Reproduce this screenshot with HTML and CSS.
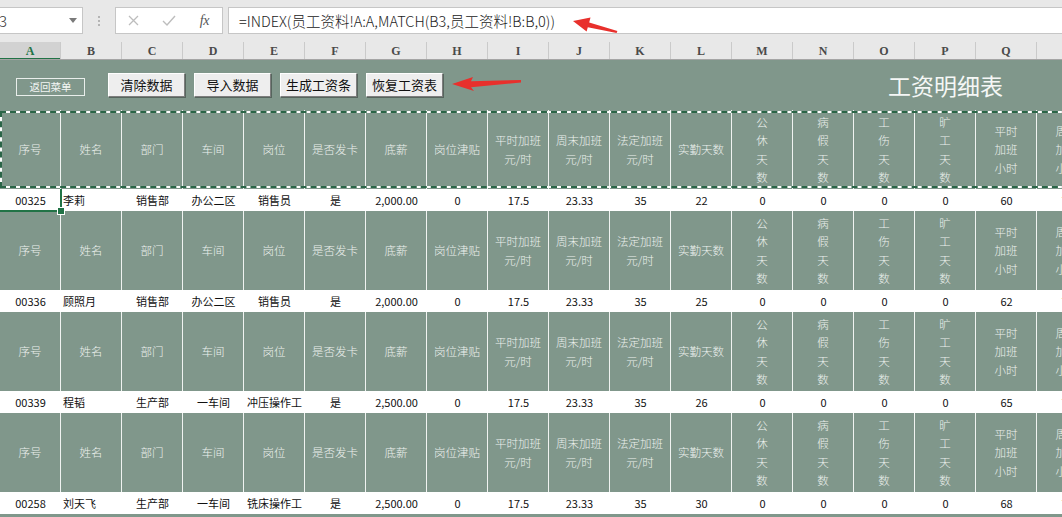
FILE: index.html
```html
<!DOCTYPE html>
<html lang="zh-CN">
<head>
<meta charset="utf-8">
<title>工资明细表</title>
<link rel="stylesheet" href="styles.css">
</head>
<body>
<div class="topbar">
  <div class="namebox"><span class="nb-text">3</span><span class="dd"></span></div>
  <div class="vdots"><i></i><i></i><i></i></div>
  <div class="fxbox">
    <span class="fxi"><svg width="11" height="11" viewBox="0 0 11 11"><path d="M1 1L10 10M10 1L1 10" stroke="#bdbdbd" stroke-width="1.3" fill="none"/></svg></span>
    <span class="fxi"><svg width="14" height="11" viewBox="0 0 14 11"><path d="M1 6L5 10L13 1" stroke="#bdbdbd" stroke-width="1.4" fill="none"/></svg></span>
    <span class="fxi fxt">fx</span>
  </div>
  <div class="formula">=INDEX(员工资料!A:A,MATCH(B3,员工资料!B:B,0))</div>
</div>
<div class="colheads">
  <div class="ch active">A</div><div class="ch">B</div><div class="ch">C</div><div class="ch">D</div><div class="ch">E</div><div class="ch">F</div><div class="ch">G</div><div class="ch">H</div><div class="ch">I</div><div class="ch">J</div><div class="ch">K</div><div class="ch">L</div><div class="ch">M</div><div class="ch">N</div><div class="ch">O</div><div class="ch">P</div><div class="ch">Q</div><div class="ch">R</div>
</div>
<div class="sheet">
  <div class="title-row">
    <div class="menu">返回菜单</div>
    <div class="btns">
      <div class="btn">清除数据</div>
      <div class="btn">导入数据</div>
      <div class="btn">生成工资条</div>
      <div class="btn">恢复工资表</div>
    </div>
    <div class="title">工资明细表</div>
  </div>

  <div class="hrow marq">
    <div class="h">序号</div><div class="h">姓名</div><div class="h">部门</div><div class="h">车间</div><div class="h">岗位</div><div class="h">是否发卡</div><div class="h">底薪</div><div class="h">岗位津贴</div><div class="h">平时加班<br>元/时</div><div class="h">周末加班<br>元/时</div><div class="h">法定加班<br>元/时</div><div class="h">实勤天数</div><div class="h">公<br>休<br>天<br>数</div><div class="h">病<br>假<br>天<br>数</div><div class="h">工<br>伤<br>天<br>数</div><div class="h">旷<br>工<br>天<br>数</div><div class="h">平时<br>加班<br>小时</div><div class="h">周末<br>加班<br>小时</div>
    <div class="marquee"></div>
  </div>
  <div class="drow">
    <div class="d selcell">00325<span class="sel"><span class="handle"></span></span></div><div class="d l">李莉</div><div class="d">销售部</div><div class="d">办公二区</div><div class="d">销售员</div><div class="d">是</div><div class="d">2,000.00</div><div class="d">0</div><div class="d">17.5</div><div class="d">23.33</div><div class="d">35</div><div class="d">22</div><div class="d">0</div><div class="d">0</div><div class="d">0</div><div class="d">0</div><div class="d">60</div><div class="d">70</div>
  </div>

  <div class="hrow">
    <div class="h">序号</div><div class="h">姓名</div><div class="h">部门</div><div class="h">车间</div><div class="h">岗位</div><div class="h">是否发卡</div><div class="h">底薪</div><div class="h">岗位津贴</div><div class="h">平时加班<br>元/时</div><div class="h">周末加班<br>元/时</div><div class="h">法定加班<br>元/时</div><div class="h">实勤天数</div><div class="h">公<br>休<br>天<br>数</div><div class="h">病<br>假<br>天<br>数</div><div class="h">工<br>伤<br>天<br>数</div><div class="h">旷<br>工<br>天<br>数</div><div class="h">平时<br>加班<br>小时</div><div class="h">周末<br>加班<br>小时</div>
  </div>
  <div class="drow">
    <div class="d">00336</div><div class="d l">顾照月</div><div class="d">销售部</div><div class="d">办公二区</div><div class="d">销售员</div><div class="d">是</div><div class="d">2,000.00</div><div class="d">0</div><div class="d">17.5</div><div class="d">23.33</div><div class="d">35</div><div class="d">25</div><div class="d">0</div><div class="d">0</div><div class="d">0</div><div class="d">0</div><div class="d">62</div><div class="d">70</div>
  </div>

  <div class="hrow">
    <div class="h">序号</div><div class="h">姓名</div><div class="h">部门</div><div class="h">车间</div><div class="h">岗位</div><div class="h">是否发卡</div><div class="h">底薪</div><div class="h">岗位津贴</div><div class="h">平时加班<br>元/时</div><div class="h">周末加班<br>元/时</div><div class="h">法定加班<br>元/时</div><div class="h">实勤天数</div><div class="h">公<br>休<br>天<br>数</div><div class="h">病<br>假<br>天<br>数</div><div class="h">工<br>伤<br>天<br>数</div><div class="h">旷<br>工<br>天<br>数</div><div class="h">平时<br>加班<br>小时</div><div class="h">周末<br>加班<br>小时</div>
  </div>
  <div class="drow">
    <div class="d">00339</div><div class="d l">程韬</div><div class="d">生产部</div><div class="d">一车间</div><div class="d">冲压操作工</div><div class="d">是</div><div class="d">2,500.00</div><div class="d">0</div><div class="d">17.5</div><div class="d">23.33</div><div class="d">35</div><div class="d">26</div><div class="d">0</div><div class="d">0</div><div class="d">0</div><div class="d">0</div><div class="d">65</div><div class="d">70</div>
  </div>

  <div class="hrow">
    <div class="h">序号</div><div class="h">姓名</div><div class="h">部门</div><div class="h">车间</div><div class="h">岗位</div><div class="h">是否发卡</div><div class="h">底薪</div><div class="h">岗位津贴</div><div class="h">平时加班<br>元/时</div><div class="h">周末加班<br>元/时</div><div class="h">法定加班<br>元/时</div><div class="h">实勤天数</div><div class="h">公<br>休<br>天<br>数</div><div class="h">病<br>假<br>天<br>数</div><div class="h">工<br>伤<br>天<br>数</div><div class="h">旷<br>工<br>天<br>数</div><div class="h">平时<br>加班<br>小时</div><div class="h">周末<br>加班<br>小时</div>
  </div>
  <div class="drow">
    <div class="d">00258</div><div class="d l">刘天飞</div><div class="d">生产部</div><div class="d">一车间</div><div class="d">铣床操作工</div><div class="d">是</div><div class="d">2,500.00</div><div class="d">0</div><div class="d">17.5</div><div class="d">23.33</div><div class="d">35</div><div class="d">30</div><div class="d">0</div><div class="d">0</div><div class="d">0</div><div class="d">0</div><div class="d">68</div><div class="d">70</div>
  </div>
  <div class="hrow"></div>
</div>

<svg class="arrows" width="1062" height="517" viewBox="0 0 1062 517">
  <polygon fill="#e8302c" points="573,21 590.5,17.5 589.2,22.4 617.4,31 616.6,33 587.8,27.3 586.6,31.5"/>
  <polygon fill="#e8302c" points="452,84 473,77 471,81.2 521,80 521,82.4 471,87.2 474,91"/>
</svg>
</body>
</html>
```
FILE: styles.css
```css
* { box-sizing: border-box; margin: 0; padding: 0; }
html, body { width: 1062px; height: 517px; overflow: hidden; }
body {
  position: relative;
  background: #ffffff;
  font-family: "Noto Sans CJK SC", "Noto Sans", sans-serif;
}

/* formula bar */
.topbar {
  height: 42px;
  background: #e8e8e8;
  display: flex;
  align-items: flex-start;
  padding-top: 7px;
}
.namebox {
  width: 83px;
  height: 27px;
  background: #fff;
  border: 1px solid #c6c6c6;
  border-left: none;
  display: flex;
  align-items: center;
  justify-content: space-between;
  padding-right: 5px;
  font-size: 15px;
  font-weight: 300;
  color: #333;
}
.nb-text { margin-left: -1px; }
.dd {
  width: 0; height: 0;
  border-left: 4px solid transparent;
  border-right: 4px solid transparent;
  border-top: 5px solid #7a7a7a;
}
.vdots {
  width: 32px;
  height: 27px;
  display: flex;
  flex-direction: column;
  align-items: center;
  justify-content: center;
  gap: 2px;
}
.vdots i { display: block; width: 2px; height: 2px; background: #b4b4b4; }
.fxbox {
  width: 108px;
  height: 27px;
  background: #fff;
  border: 1px solid #c6c6c6;
  display: flex;
  align-items: center;
}
.fxi {
  width: 35.5px;
  display: flex;
  justify-content: center;
  align-items: center;
}
.fxt {
  font-family: "Liberation Serif", serif;
  font-style: italic;
  font-size: 14px;
  color: #555;
  letter-spacing: -0.5px;
}
.formula {
  flex: 1;
  margin-left: 5px;
  height: 27px;
  background: #fff;
  border: 1px solid #c6c6c6;
  border-right: none;
  padding-left: 10px;
  font-size: 14.5px;
  font-weight: 300;
  line-height: 25px;
  color: #222;
  white-space: nowrap;
}

/* column letters */
.colheads {
  display: grid;
  grid-template-columns: repeat(18, 61px);
  height: 18px;
  background: #e8e8e8;
  border-bottom: 1px solid #a5a5a5;
  overflow: hidden;
}
.ch {
  border-right: 1px solid #cacaca;
  font-family: "Liberation Serif", serif;
  font-size: 12px;
  font-weight: bold;
  color: #4a4a4a;
  text-align: center;
  line-height: 18px;
}
.ch.active {
  background: #d2d2d2;
  color: #217346;
  box-shadow: inset 0 -2px 0 #217346;
}

/* sheet */
.sheet {
  background: #80978b;
  overflow: hidden;
  height: 457px;
}
.title-row {
  height: 50px;
  display: flex;
  align-items: center;
  padding-left: 16px;
}
.menu {
  width: 69px;
  height: 18px;
  border: 1px solid #e9eeeb;
  color: #f2f5f3;
  font-size: 10.5px;
  line-height: 16px;
  text-align: center;
  margin-right: 23px;
  margin-top: 4px;
}
.btns { display: flex; gap: 9px; }
.btn {
  width: 77px;
  height: 24px;
  background: #eeeeee;
  border: 1px solid;
  border-color: #ffffff #7d7d7d #7d7d7d #ffffff;
  box-shadow: 1px 1px 0 #56655d;
  font-size: 13px;
  line-height: 22px;
  text-align: center;
  color: #111;
  white-space: nowrap;
}
.title {
  margin-left: auto;
  margin-right: 59px;
  font-size: 23px;
  font-weight: 400;
  line-height: 1;
  color: #f5f7f6;
  white-space: nowrap;
}

.hrow, .drow {
  display: grid;
  grid-template-columns: repeat(18, 61px);
  width: 1098px;
}
.hrow { height: 79px; }
.drow { height: 22px; background: #fff; }
.marq { position: relative; }

.h {
  border-right: 1px solid #f0f3f1;
  display: flex;
  align-items: center;
  justify-content: center;
  text-align: center;
  color: #edf1ee;
  font-size: 11.5px;
  font-weight: 300;
  line-height: 18.5px;
  white-space: nowrap;
}
.d {
  display: flex;
  align-items: center;
  justify-content: center;
  font-size: 11px;
  color: #111;
  white-space: nowrap;
}
.d.l { justify-content: flex-start; padding-left: 2px; }

/* copy marquee over the first header row */
.marquee {
  position: absolute;
  top: 1px;
  bottom: 1px;
  left: 0;
  right: -20px;
  border: 2px solid #ffffff;
  pointer-events: none;
}
.marquee::after {
  content: "";
  position: absolute;
  inset: -2px;
  border: 2px dashed #2a6547;
}

/* active cell A3 */
.selcell { position: relative; }
.sel {
  position: absolute;
  left: -3px;
  top: 0;
  right: -1px;
  bottom: -1px;
  border: 2px solid #217346;
  border-top: none;
}
.handle {
  position: absolute;
  right: -4px;
  bottom: -4px;
  width: 6px;
  height: 6px;
  background: #217346;
  outline: 1px solid #ffffff;
}

.arrows {
  position: absolute;
  left: 0;
  top: 0;
  pointer-events: none;
}
```
